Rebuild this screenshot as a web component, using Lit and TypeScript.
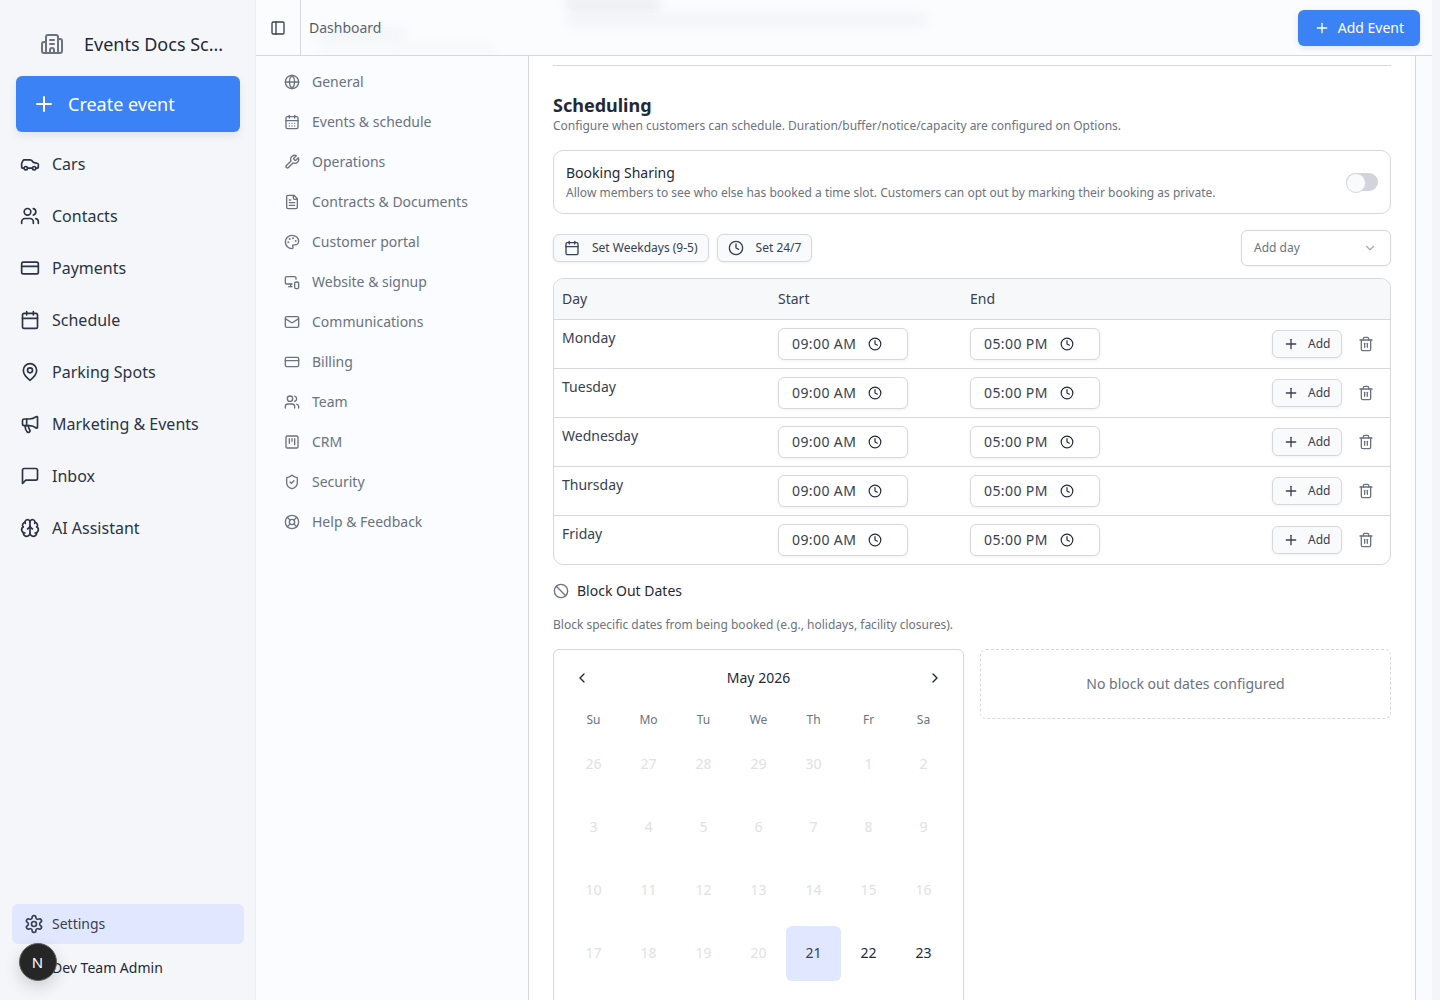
import { LitElement, html, css, svg } from 'lit';
import { customElement } from 'lit/decorators.js';

const icons: Record<string, unknown> = {
	building: svg`<path d="M10 12h4"/><path d="M10 8h4"/><path d="M14 21v-3a2 2 0 0 0-4 0v3"/><path d="M6 10H4a2 2 0 0 0-2 2v7a2 2 0 0 0 2 2h16a2 2 0 0 0 2-2V9a2 2 0 0 0-2-2h-2"/><path d="M6 21V5a2 2 0 0 1 2-2h8a2 2 0 0 1 2 2v16"/>`,
	plus: svg`<path d="M5 12h14"/><path d="M12 5v14"/>`,
	car: svg`<path d="M19 17h2c.6 0 1-.4 1-1v-3c0-.9-.7-1.7-1.5-1.9C18.7 10.6 16 10 16 10s-1.3-1.4-2.2-2.3c-.5-.4-1.1-.7-1.8-.7H5c-.6 0-1.1.4-1.4.9l-1.4 2.9A3.7 3.7 0 0 0 2 12v4c0 .6.4 1 1 1h2"/><circle cx="7" cy="17" r="2"/><path d="M9 17h6"/><circle cx="17" cy="17" r="2"/>`,
	users: svg`<path d="M16 21v-2a4 4 0 0 0-4-4H6a4 4 0 0 0-4 4v2"/><circle cx="9" cy="7" r="4"/><path d="M22 21v-2a4 4 0 0 0-3-3.87"/><path d="M16 3.13a4 4 0 0 1 0 7.75"/>`,
	card: svg`<rect width="20" height="14" x="2" y="5" rx="2"/><line x1="2" x2="22" y1="10" y2="10"/>`,
	calendar: svg`<path d="M8 2v4"/><path d="M16 2v4"/><rect width="18" height="18" x="3" y="4" rx="2"/><path d="M3 10h18"/>`,
	calendarDays: svg`<path d="M8 2v4"/><path d="M16 2v4"/><rect width="18" height="18" x="3" y="4" rx="2"/><path d="M3 10h18"/><path d="M8 14h.01"/><path d="M12 14h.01"/><path d="M16 14h.01"/><path d="M8 18h.01"/><path d="M12 18h.01"/><path d="M16 18h.01"/>`,
	pin: svg`<path d="M20 10c0 6-8 12-8 12s-8-6-8-12a8 8 0 0 1 16 0Z"/><circle cx="12" cy="10" r="3"/>`,
	megaphone: svg`<path d="M11 6a13 13 0 0 0 8.4-2.8A1 1 0 0 1 21 4v12a1 1 0 0 1-1.6.8A13 13 0 0 0 11 14H5a2 2 0 0 1-2-2V8a2 2 0 0 1 2-2z"/><path d="M6 14a12 12 0 0 0 2.4 7.2 2 2 0 0 0 3.2-2.4A8 8 0 0 1 10 14"/><path d="M8 6v8"/>`,
	message: svg`<path d="M21 15a2 2 0 0 1-2 2H7l-4 4V5a2 2 0 0 1 2-2h14a2 2 0 0 1 2 2z"/>`,
	brain: svg`<path d="M12 18V5"/><path d="M15 13a4.17 4.17 0 0 1-3-4 4.17 4.17 0 0 1-3 4"/><path d="M17.598 6.5A3 3 0 1 0 12 5a3 3 0 1 0-5.598 1.5"/><path d="M17.997 5.125a4 4 0 0 1 2.526 5.77"/><path d="M18 18a4 4 0 0 0 2-7.464"/><path d="M19.967 17.483A4 4 0 1 1 12 18a4 4 0 1 1-7.967-.517"/><path d="M6 18a4 4 0 0 1-2-7.464"/><path d="M6.003 5.125a4 4 0 0 0-2.526 5.77"/>`,
	gear: svg`<path d="M12.22 2h-.44a2 2 0 0 0-2 2v.18a2 2 0 0 1-1 1.73l-.43.25a2 2 0 0 1-2 0l-.15-.08a2 2 0 0 0-2.73.73l-.22.38a2 2 0 0 0 .73 2.73l.15.1a2 2 0 0 1 1 1.72v.51a2 2 0 0 1-1 1.74l-.15.09a2 2 0 0 0-.73 2.73l.22.38a2 2 0 0 0 2.73.73l.15-.08a2 2 0 0 1 2 0l.43.25a2 2 0 0 1 1 1.73V20a2 2 0 0 0 2 2h.44a2 2 0 0 0 2-2v-.18a2 2 0 0 1 1-1.73l.43-.25a2 2 0 0 1 2 0l.15.08a2 2 0 0 0 2.73-.73l.22-.39a2 2 0 0 0-.73-2.73l-.15-.08a2 2 0 0 1-1-1.74v-.5a2 2 0 0 1 1-1.74l.15-.09a2 2 0 0 0 .73-2.73l-.22-.38a2 2 0 0 0-2.73-.73l-.15.08a2 2 0 0 1-2 0l-.43-.25a2 2 0 0 1-1-1.73V4a2 2 0 0 0-2-2z"/><circle cx="12" cy="12" r="3"/>`,
	panel: svg`<rect width="18" height="18" x="3" y="3" rx="2"/><path d="M9 3v18"/>`,
	globe: svg`<circle cx="12" cy="12" r="10"/><path d="M12 2a14.5 14.5 0 0 0 0 20 14.5 14.5 0 0 0 0-20"/><path d="M2 12h20"/>`,
	wrench: svg`<path d="M14.7 6.3a1 1 0 0 0 0 1.4l1.6 1.6a1 1 0 0 0 1.4 0l3.77-3.77a6 6 0 0 1-7.94 7.94l-6.91 6.91a2.12 2.12 0 0 1-3-3l6.91-6.91a6 6 0 0 1 7.94-7.94l-3.76 3.76z"/>`,
	file: svg`<path d="M15 2H6a2 2 0 0 0-2 2v16a2 2 0 0 0 2 2h12a2 2 0 0 0 2-2V7Z"/><path d="M14 2v4a2 2 0 0 0 2 2h4"/><path d="M10 9H8"/><path d="M16 13H8"/><path d="M16 17H8"/>`,
	palette: svg`<circle cx="13.5" cy="6.5" r=".5" fill="currentColor"/><circle cx="17.5" cy="10.5" r=".5" fill="currentColor"/><circle cx="8.5" cy="7.5" r=".5" fill="currentColor"/><circle cx="6.5" cy="12.5" r=".5" fill="currentColor"/><path d="M12 2C6.5 2 2 6.5 2 12s4.5 10 10 10c.926 0 1.648-.746 1.648-1.688 0-.437-.18-.835-.437-1.125-.29-.289-.438-.652-.438-1.125a1.64 1.64 0 0 1 1.668-1.668h1.996c3.051 0 5.555-2.503 5.555-5.554C21.965 6.012 17.461 2 12 2z"/>`,
	devices: svg`<path d="M18 8V6a2 2 0 0 0-2-2H4a2 2 0 0 0-2 2v7a2 2 0 0 0 2 2h8"/><path d="M10 19v-3.96 3.15"/><path d="M7 19h5"/><rect width="6" height="10" x="16" y="12" rx="2"/>`,
	mail: svg`<rect width="20" height="16" x="2" y="4" rx="2"/><path d="m22 7-8.97 5.7a1.94 1.94 0 0 1-2.06 0L2 7"/>`,
	kanban: svg`<rect width="18" height="18" x="3" y="3" rx="2"/><path d="M8 7v7"/><path d="M12 7v4"/><path d="M16 7v9"/>`,
	shield: svg`<path d="M20 13c0 5-3.5 7.5-7.66 8.95a1 1 0 0 1-.67-.01C7.5 20.5 4 18 4 13V6a1 1 0 0 1 1-1c2 0 4.5-1.2 6.24-2.72a1.17 1.17 0 0 1 1.52 0C14.51 3.81 17 5 19 5a1 1 0 0 1 1 1z"/><path d="m9 12 2 2 4-4"/>`,
	buoy: svg`<circle cx="12" cy="12" r="10"/><path d="m4.93 4.93 4.24 4.24"/><path d="m14.83 9.17 4.24-4.24"/><path d="m14.83 14.83 4.24 4.24"/><path d="m9.17 14.83-4.24 4.24"/><circle cx="12" cy="12" r="4"/>`,
	clock: svg`<circle cx="12" cy="12" r="10"/><polyline points="12 6 12 12 16 14"/>`,
	trash: svg`<path d="M3 6h18"/><path d="M19 6v14c0 1-1 2-2 2H7c-1 0-2-1-2-2V6"/><path d="M8 6V4c0-1 1-2 2-2h4c1 0 2 1 2 2v2"/><line x1="10" x2="10" y1="11" y2="17"/><line x1="14" x2="14" y1="11" y2="17"/>`,
	ban: svg`<circle cx="12" cy="12" r="10"/><path d="m4.9 4.9 14.2 14.2"/>`,
	left: svg`<path d="m15 18-6-6 6-6"/>`,
	right: svg`<path d="m9 18 6-6-6-6"/>`,
	down: svg`<path d="m6 9 6 6 6-6"/>`
};

const ic = (name: string, size = 16) =>
	html`<svg
		class="ic"
		width=${size}
		height=${size}
		viewBox="0 0 24 24"
		fill="none"
		stroke="currentColor"
		stroke-width="2"
		stroke-linecap="round"
		stroke-linejoin="round"
	>
		${icons[name]}
	</svg>`;

const mainNav = [
	['car', 'Cars'],
	['users', 'Contacts'],
	['card', 'Payments'],
	['calendar', 'Schedule'],
	['pin', 'Parking Spots'],
	['megaphone', 'Marketing & Events'],
	['message', 'Inbox'],
	['brain', 'AI Assistant']
];

const settingsNav = [
	['globe', 'General'],
	['calendarDays', 'Events & schedule'],
	['wrench', 'Operations'],
	['file', 'Contracts & Documents'],
	['palette', 'Customer portal'],
	['devices', 'Website & signup'],
	['mail', 'Communications'],
	['card', 'Billing'],
	['users', 'Team'],
	['kanban', 'CRM'],
	['shield', 'Security'],
	['buoy', 'Help & Feedback']
];

const days = ['Monday', 'Tuesday', 'Wednesday', 'Thursday', 'Friday'];
const weekdays = ['Su', 'Mo', 'Tu', 'We', 'Th', 'Fr', 'Sa'];
const dates = [26, 27, 28, 29, 30, 1, 2, 3, 4, 5, 6, 7, 8, 9, 10, 11, 12, 13, 14, 15, 16, 17, 18, 19, 20, 21, 22, 23];

@customElement('app-root')
export class AppRoot extends LitElement {
	static styles = css`
		:host {
			display: block;
			font-family: 'Noto Sans', sans-serif;
			color: #1f2937;
		}
		* {
			box-sizing: border-box;
		}
		.ic {
			display: block;
			flex: none;
		}
		.app {
			display: flex;
			height: 1000px;
			overflow: hidden;
			background: #f3f5f8;
		}

		.sidebar {
			position: relative;
			flex: none;
			width: 256px;
			display: flex;
			flex-direction: column;
			padding-top: 24px;
			background: #f4f6f9;
			border-right: 1px solid #eceef2;
		}
		.brand {
			display: flex;
			align-items: center;
			gap: 20px;
			height: 40px;
			padding-left: 40px;
			font-size: 18px;
			white-space: nowrap;
		}
		.brand .ic {
			color: #6b7280;
		}
		.create {
			display: flex;
			align-items: center;
			gap: 12px;
			height: 56px;
			margin: 12px 15px 6px 16px;
			padding: 0 16px;
			color: #fff;
			font-size: 18px;
			background: #3b82f6;
			border-radius: 6px;
			box-shadow: 0 4px 8px rgba(15, 23, 42, 0.08);
		}
		.main-item {
			display: flex;
			align-items: center;
			gap: 12px;
			height: 52px;
			padding-left: 20px;
			color: #2b3443;
			font-size: 16px;
		}
		.side-foot {
			margin-top: auto;
			padding-bottom: 8px;
			font-size: 14px;
			line-height: 20px;
		}
		.settings-link {
			display: flex;
			align-items: center;
			gap: 8px;
			height: 40px;
			margin: 0 11px 0 12px;
			padding-left: 12px;
			color: #374151;
			background: #e0e7ff;
			border-radius: 6px;
		}
		.user {
			display: flex;
			align-items: center;
			height: 48px;
			padding-left: 52px;
		}
		.dev-badge {
			position: absolute;
			left: 19px;
			top: 943px;
			width: 38px;
			height: 38px;
			display: flex;
			align-items: center;
			justify-content: center;
			padding: 0 1px 1px 0;
			color: #fff;
			font-size: 15px;
			background: #262626;
			border: 1px solid #5f5f5f;
			border-radius: 50%;
			box-shadow: 0 6px 16px rgba(0, 0, 0, 0.16);
		}

		.shell {
			flex: none;
			width: 1176px;
			display: flex;
			flex-direction: column;
			background: #fafbfe;
		}
		.topbar {
			position: relative;
			flex: none;
			display: flex;
			align-items: center;
			height: 56px;
			padding-right: 12px;
			overflow: hidden;
			background: #fbfcfe;
			border-bottom: 1px solid #d6d8dc;
		}
		.toggle-btn {
			width: 45px;
			height: 55px;
			display: flex;
			align-items: center;
			padding-left: 14px;
			color: #374151;
			border-right: 1px solid #d6d8dc;
		}
		.crumb {
			margin-left: 8px;
			color: #4b5563;
			font-size: 14px;
			line-height: 20px;
		}
		.ghost {
			position: absolute;
			height: 8px;
			background: #d9dbe0;
			border-radius: 4px;
			filter: blur(6px);
		}
		.ghost-a {
			left: 310px;
			top: 0;
			width: 95px;
			opacity: 0.7;
		}
		.ghost-b {
			left: 310px;
			top: 16px;
			width: 360px;
			opacity: 0.4;
		}
		.ghost-c {
			left: 60px;
			top: 30px;
			width: 90px;
			opacity: 0.35;
		}
		.ghost-d {
			left: 60px;
			top: 46px;
			width: 180px;
			opacity: 0.2;
		}
		.add-event {
			position: relative;
			display: flex;
			align-items: center;
			gap: 8px;
			height: 36px;
			margin-left: auto;
			padding: 0 16px;
			color: #fff;
			font-size: 14px;
			line-height: 20px;
			background: #3b82f6;
			border-radius: 6px;
			box-shadow: 0 2px 6px rgba(15, 23, 42, 0.1);
		}

		.body {
			flex: 1;
			display: flex;
			min-height: 0;
		}
		.settings-nav {
			flex: none;
			width: 273px;
			padding: 6px 12px 0;
			background: #fafcff;
			border-right: 1px solid #d6d8dc;
		}
		.settings-item {
			display: flex;
			align-items: center;
			gap: 12px;
			height: 40px;
			padding-left: 16px;
			color: #6b7280;
			font-size: 14px;
			line-height: 20px;
		}
		.panel {
			flex: none;
			width: 887px;
			padding: 9px 24px 0;
			background: #fff;
			border-right: 1px solid #d6d8dc;
		}
		.rule {
			height: 1px;
			background: #d6d8dc;
		}
		h2 {
			height: 27px;
			margin: 25px 0 0;
			font-size: 18px;
			line-height: 28px;
			font-weight: 700;
		}
		.sub {
			margin: 0;
			color: #6b7280;
			font-size: 12px;
			line-height: 16px;
		}
		.share {
			display: flex;
			align-items: center;
			justify-content: space-between;
			height: 64px;
			margin-top: 16px;
			padding: 0 12px;
			border: 1px solid #d6d8dc;
			border-radius: 10px;
		}
		.share-title {
			font-size: 14px;
			line-height: 20px;
		}
		.share-desc {
			margin-top: 2px;
			color: #6b7280;
			font-size: 12px;
			line-height: 16px;
		}
		.switch {
			position: relative;
			width: 32px;
			height: 18px;
			background: #d1d5db;
			border-radius: 9px;
		}
		.switch::after {
			content: '';
			position: absolute;
			left: 0;
			top: 0;
			width: 18px;
			height: 18px;
			background: #f8fafc;
			border: 1px solid #d6d8dc;
			border-radius: 50%;
		}
		.presets {
			display: flex;
			align-items: center;
			gap: 8px;
			margin-top: 16px;
			color: #374151;
			font-size: 12px;
			line-height: 16px;
		}
		.preset {
			display: flex;
			align-items: center;
			gap: 12px;
			height: 28px;
			padding: 0 10px;
			background: #f8fafc;
			border: 1px solid #d6d8dc;
			border-radius: 6px;
			box-shadow: 0 1px 3px rgba(15, 23, 42, 0.06);
		}
		.select {
			display: flex;
			align-items: center;
			justify-content: space-between;
			width: 150px;
			height: 36px;
			margin-left: auto;
			padding: 0 13px 0 12px;
			color: #6b7280;
			background: #fff;
			border: 1px solid #d6d8dc;
			border-radius: 6px;
			box-shadow: 0 1px 3px rgba(15, 23, 42, 0.05);
		}
		.select .ic {
			color: #a4a9b2;
		}
		.table {
			margin-top: 12px;
			overflow: hidden;
			border: 1px solid #d6d8dc;
			border-radius: 10px;
		}
		.row {
			display: grid;
			grid-template-columns: 216px 192px 1fr auto;
			height: 49px;
			padding: 8px 8px 0;
			color: #374151;
			font-size: 14px;
			line-height: 20px;
			border-top: 1px solid #d6d8dc;
		}
		.row.head {
			height: 40px;
			align-items: center;
			padding-top: 0;
			background: #f7f8f9;
			border-top: 0;
		}
		.time {
			display: flex;
			align-items: center;
			gap: 12px;
			width: 130px;
			height: 32px;
			padding-left: 13px;
			background: #fff;
			border: 1px solid #d6d8dc;
			border-radius: 6px;
			box-shadow: 0 1px 3px rgba(15, 23, 42, 0.06);
		}
		.time span {
			letter-spacing: 0.4px;
		}
		.time .ic {
			color: #1f2937;
		}
		.actions {
			display: flex;
			align-items: center;
			gap: 8px;
			height: 32px;
		}
		.add {
			display: flex;
			align-items: center;
			gap: 9px;
			width: 70px;
			height: 28px;
			padding-left: 10px;
			font-size: 12px;
			line-height: 16px;
			background: #f8fafc;
			border: 1px solid #d6d8dc;
			border-radius: 6px;
			box-shadow: 0 1px 3px rgba(15, 23, 42, 0.06);
		}
		.trash {
			width: 32px;
			display: flex;
			justify-content: center;
			color: #6b7280;
		}
		.block-title {
			display: flex;
			align-items: center;
			gap: 8px;
			margin-top: 16px;
			font-size: 14px;
			line-height: 20px;
		}
		.block-title .ic {
			color: #6b7280;
		}
		.block-desc {
			margin: 16px 0;
		}
		.split {
			display: grid;
			grid-template-columns: 411px 411px;
			gap: 16px;
			align-items: start;
		}
		.calendar {
			height: 420px;
			padding: 12px;
			border: 1px solid #d6d8dc;
			border-radius: 6px;
		}
		.cal-head {
			display: flex;
			align-items: center;
			justify-content: space-between;
			height: 32px;
			padding: 0 8px;
			font-size: 14px;
			line-height: 20px;
		}
		.grid {
			display: grid;
			grid-template-columns: repeat(7, 55px);
			row-gap: 8px;
			margin-top: 15px;
			text-align: center;
		}
		.wd {
			height: 20px;
			color: #6b7280;
			font-size: 12px;
			line-height: 22px;
		}
		.cell {
			display: flex;
			align-items: center;
			justify-content: center;
			height: 55px;
			padding-bottom: 1px;
			font-size: 14px;
			line-height: 20px;
		}
		.cell.off {
			color: #dfe1e4;
		}
		.cell.today {
			color: #374151;
			background: #e0e7ff;
			border-radius: 6px;
		}
		.empty {
			display: flex;
			align-items: center;
			justify-content: center;
			height: 70px;
			color: #6b7280;
			font-size: 14px;
			line-height: 20px;
			border: 1px dashed #d6d8dc;
			border-radius: 6px;
		}
	`;

	render() {
		return html`<div class="app">
			<aside class="sidebar">
				<div class="brand">${ic('building', 24)}<span>Events Docs Sc...</span></div>
				<div class="create">${ic('plus', 24)}<span>Create event</span></div>
				${mainNav.map(([icon, label]) => html`<div class="main-item">${ic(icon, 20)}<span>${label}</span></div>`)}
				<div class="side-foot">
					<div class="settings-link">${ic('gear', 20)}<span>Settings</span></div>
					<div class="user">Dev Team Admin</div>
				</div>
				<div class="dev-badge">N</div>
			</aside>
			<div class="shell">
				<header class="topbar">
					<i class="ghost ghost-a"></i>
					<i class="ghost ghost-b"></i>
					<i class="ghost ghost-c"></i>
					<i class="ghost ghost-d"></i>
					<div class="toggle-btn">${ic('panel', 16)}</div>
					<div class="crumb">Dashboard</div>
					<div class="add-event">${ic('plus', 16)}<span>Add Event</span></div>
				</header>
				<div class="body">
					<nav class="settings-nav">
						${settingsNav.map(
							([icon, label]) => html`<div class="settings-item">${ic(icon, 16)}<span>${label}</span></div>`
						)}
					</nav>
					<section class="panel">
						<div class="rule"></div>
						<h2>Scheduling</h2>
						<p class="sub">Configure when customers can schedule. Duration/buffer/notice/capacity are configured on Options.</p>
						<div class="share">
							<div>
								<div class="share-title">Booking Sharing</div>
								<div class="share-desc">
									Allow members to see who else has booked a time slot. Customers can opt out by marking their booking as
									private.
								</div>
							</div>
							<div class="switch"></div>
						</div>
						<div class="presets">
							<div class="preset">${ic('calendar', 16)}<span>Set Weekdays (9-5)</span></div>
							<div class="preset">${ic('clock', 16)}<span>Set 24/7</span></div>
							<div class="select"><span>Add day</span>${ic('down', 14)}</div>
						</div>
						<div class="table">
							<div class="row head"><span>Day</span><span>Start</span><span>End</span><span></span></div>
							${days.map(
								(day) => html`<div class="row">
									<span>${day}</span>
									<div class="time"><span>09:00 AM</span>${ic('clock', 14)}</div>
									<div class="time"><span>05:00 PM</span>${ic('clock', 14)}</div>
									<div class="actions">
										<div class="add">${ic('plus', 16)}<span>Add</span></div>
										<div class="trash">${ic('trash', 16)}</div>
									</div>
								</div>`
							)}
						</div>
						<div class="block-title">${ic('ban', 16)}<span>Block Out Dates</span></div>
						<p class="sub block-desc">Block specific dates from being booked (e.g., holidays, facility closures).</p>
						<div class="split">
							<div class="calendar">
								<div class="cal-head">${ic('left', 16)}<span>May 2026</span>${ic('right', 16)}</div>
								<div class="grid">
									${weekdays.map((d) => html`<div class="wd">${d}</div>`)}
									${dates.map((d, i) => {
										const cls = i < 25 ? 'cell off' : d === 21 ? 'cell today' : 'cell';
										return html`<div class=${cls}>${d}</div>`;
									})}
								</div>
							</div>
							<div class="empty">No block out dates configured</div>
						</div>
					</section>
				</div>
			</div>
		</div>`;
	}
}
